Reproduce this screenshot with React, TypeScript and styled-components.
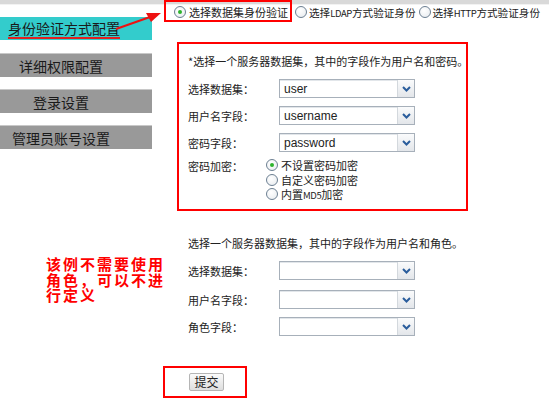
import * as React from "react";
import styled, { createGlobalStyle } from "styled-components";

const GlobalStyle = createGlobalStyle`
  html, body {
    margin: 0;
    padding: 0;
    background: #ffffff;
  }
  body {
    font-family: "Noto Sans CJK SC", "Liberation Sans", sans-serif;
    font-size: 11px;
    color: #222222;
  }
`;

const Page = styled.div`
  position: relative;
  display: flex;
  width: 549px;
  height: 398px;
  overflow: hidden;
  background: linear-gradient(#d9d9d9 0 4px, #f2f2f2 4px 5px, #ffffff 5px);
`;

const LeftColumn = styled.div`
  width: 163px;
  flex-shrink: 0;
  display: flex;
  flex-direction: column;
`;

const Nav = styled.div`
  width: 152px;
  padding-top: 17px;
  display: flex;
  flex-direction: column;
  gap: 12px;
`;

interface NavItemProps {
  $active?: boolean;
}

const NavItem = styled.div<NavItemProps>`
  height: ${(p) => (p.$active ? "23px" : "24px")};
  margin-bottom: ${(p) => (p.$active ? "1px" : "0")};
  display: flex;
  align-items: center;
  justify-content: ${(p) => (p.$active ? "flex-start" : "center")};
  padding: ${(p) => (p.$active ? "0 0 0 8px" : "0 30px 0 0")};
  background: ${(p) => (p.$active ? "#33cccc" : "#999999")};
  border-top: ${(p) => (p.$active ? "none" : "1px solid #c8c8c8")};
  box-sizing: border-box;
  font-size: 14px;
  color: #1a1a1a;
  white-space: nowrap;
`;

const ActiveLabel = styled.span`
  border-bottom: 2px solid #e02020;
  line-height: 16px;
  padding-bottom: 1px;
  margin-top: 2px;
`;

const Note = styled.div`
  margin: 107px 0 0 46px;
  width: 122px;
  color: #ff0000;
  font-weight: bold;
  font-size: 15px;
  line-height: 15.5px;
  letter-spacing: 2px;
`;

const RightColumn = styled.div`
  flex: 1;
  display: flex;
  flex-direction: column;
`;

const ModeRow = styled.div`
  height: 22px;
  display: flex;
  align-items: center;
`;

interface HighlightProps {
  $w: number;
  $h: number;
}

const Highlight = styled.div<HighlightProps>`
  width: ${(p) => p.$w}px;
  height: ${(p) => p.$h}px;
  box-sizing: border-box;
  border: 2px solid #ff0000;
  display: flex;
  align-items: center;
  justify-content: center;
`;

const ModeOption = styled.label`
  display: flex;
  align-items: center;
  gap: 2px;
  white-space: nowrap;
  font-size: 10.6px;
  margin-right: 3px;
`;

const FirstMode = styled(ModeOption)`
  font-size: 11px;
  gap: 3px;
  margin: 0 0 0 8px;
  padding-top: 2px;
`;

const OtherModes = styled.div`
  display: flex;
  align-items: center;
  padding-left: 3px;
  padding-top: 2px;
`;

const Latin = styled.span`
  font-size: 9.5px;
  letter-spacing: -0.4px;
`;

interface RadioProps {
  $checked?: boolean;
}

const Radio = styled.span<RadioProps>`
  width: 12px;
  height: 12px;
  box-sizing: border-box;
  border-radius: 50%;
  border: 1px solid #6c7f92;
  background: radial-gradient(circle at 40% 35%, #ffffff 0, #e6eaee 100%);
  display: inline-flex;
  align-items: center;
  justify-content: center;
  flex-shrink: 0;
  &::after {
    content: "";
    width: 4px;
    height: 4px;
    border-radius: 50%;
    background: ${(p) => (p.$checked ? "#2db32d" : "transparent")};
  }
`;

const FormBox = styled.div`
  margin: 20px 0 0 14px;
  width: 291px;
  height: 175px;
  box-sizing: border-box;
  border: 2px solid #ff0000;
  padding: 9px 0 0 9px;
`;

const Section = styled.div`
  margin: 0 0 0 25px;
  padding-top: 24px;
`;

const Title = styled.div`
  height: 16px;
  line-height: 16px;
  white-space: nowrap;
  margin-bottom: 10px;
`;

interface FieldRowProps {
  $gap?: number;
}

const FieldRow = styled.div<FieldRowProps>`
  display: flex;
  align-items: center;
  height: 19px;
  margin-bottom: ${(p) => p.$gap ?? 8}px;
`;

const Label = styled.span`
  width: 91px;
  flex-shrink: 0;
  white-space: nowrap;
`;

const Select = styled.div`
  width: 136px;
  height: 19px;
  box-sizing: border-box;
  border: 1px solid #a7b0ba;
  display: flex;
  background: #ffffff;
`;

const SelectValue = styled.span`
  flex: 1;
  padding-left: 4px;
  font-family: "Liberation Sans", Arial, sans-serif;
  font-size: 12px;
  line-height: 17px;
  color: #222222;
  border-top: 1px solid #e2e6ea;
`;

const SelectButton = styled.span`
  width: 16px;
  border-left: 1px solid #d3d8dd;
  background: linear-gradient(#fafbfc, #e3e6ea);
  display: flex;
  align-items: center;
  justify-content: center;
`;

const EncryptRow = styled.div`
  display: flex;
  align-items: flex-start;
`;

const EncryptLabel = styled(Label)`
  width: 78px;
  line-height: 16px;
`;

const RadioList = styled.div`
  display: flex;
  flex-direction: column;
`;

const RadioItem = styled.label`
  display: flex;
  align-items: center;
  gap: 3px;
  height: 14.5px;
  white-space: nowrap;
`;

const SubmitArea = styled.div`
  margin-top: 22px;
`;

const SubmitButton = styled.button`
  width: 35px;
  height: 18px;
  margin-left: 3px;
  padding: 0;
  border: 1px solid #b5b5b5;
  border-radius: 2px;
  background: linear-gradient(#fbfbfb, #dedede);
  font-family: "Noto Sans CJK SC", sans-serif;
  font-size: 12px;
  line-height: 16px;
  color: #222222;
`;

const Arrow = styled.svg`
  position: absolute;
  left: 0;
  top: 0;
  pointer-events: none;
`;

const Chevron = () => (
  <svg width="9" height="6" viewBox="0 0 9 6">
    <path d="M1 1 L4.5 4.5 L8 1" fill="none" stroke="#2a5d9c" strokeWidth="2" />
  </svg>
);

interface DropProps {
  value?: string;
}

const Dropdown = ({ value }: DropProps) => (
  <Select>
    <SelectValue>{value}</SelectValue>
    <SelectButton>
      <Chevron />
    </SelectButton>
  </Select>
);

const App = () => {
  return (
    <>
      <GlobalStyle />
      <Page>
        <LeftColumn>
          <Nav>
            <NavItem $active>
              <ActiveLabel>身份验证方式配置</ActiveLabel>
            </NavItem>
            <NavItem>详细权限配置</NavItem>
            <NavItem>登录设置</NavItem>
            <NavItem>管理员账号设置</NavItem>
          </Nav>
          <Note>该例不需要使用角色，可以不进行定义</Note>
        </LeftColumn>

        <RightColumn>
          <ModeRow>
            <Highlight $w={128} $h={22} style={{ marginLeft: 1, justifyContent: "flex-start" }}>
              <FirstMode>
                <Radio $checked />
                选择数据集身份验证
              </FirstMode>
            </Highlight>
            <OtherModes>
              <ModeOption>
                <Radio />
                <span>
                  选择<Latin>LDAP</Latin>方式验证身份
                </span>
              </ModeOption>
              <ModeOption>
                <Radio />
                <span>
                  选择<Latin>HTTP</Latin>方式验证身份
                </span>
              </ModeOption>
            </OtherModes>
          </ModeRow>

          <FormBox>
            <Title>*选择一个服务器数据集，其中的字段作为用户名和密码。</Title>
            <FieldRow>
              <Label>选择数据集：</Label>
              <Dropdown value="user" />
            </FieldRow>
            <FieldRow>
              <Label>用户名字段：</Label>
              <Dropdown value="username" />
            </FieldRow>
            <FieldRow $gap={6}>
              <Label>密码字段：</Label>
              <Dropdown value="password" />
            </FieldRow>
            <EncryptRow>
              <EncryptLabel>密码加密：</EncryptLabel>
              <RadioList>
                <RadioItem>
                  <Radio $checked />
                  不设置密码加密
                </RadioItem>
                <RadioItem>
                  <Radio />
                  自定义密码加密
                </RadioItem>
                <RadioItem>
                  <Radio />
                  <span>
                    内置<Latin>MD5</Latin>加密
                  </span>
                </RadioItem>
              </RadioList>
            </EncryptRow>
          </FormBox>

          <Section>
            <Title>选择一个服务器数据集，其中的字段作为用户名和角色。</Title>
            <FieldRow $gap={10}>
              <Label>选择数据集：</Label>
              <Dropdown />
            </FieldRow>
            <FieldRow>
              <Label>用户名字段：</Label>
              <Dropdown />
            </FieldRow>
            <FieldRow>
              <Label>角色字段：</Label>
              <Dropdown />
            </FieldRow>
          </Section>

          <SubmitArea>
            <Highlight $w={84} $h={32}>
              <SubmitButton>提交</SubmitButton>
            </Highlight>
          </SubmitArea>
        </RightColumn>

        <Arrow width="549" height="398">
          <line x1="116" y1="29" x2="150" y2="17" stroke="#ee1111" strokeWidth="2" />
          <polygon points="161,13 146,13 151,22" fill="#ee1111" />
        </Arrow>
      </Page>
    </>
  );
};

export default App;
